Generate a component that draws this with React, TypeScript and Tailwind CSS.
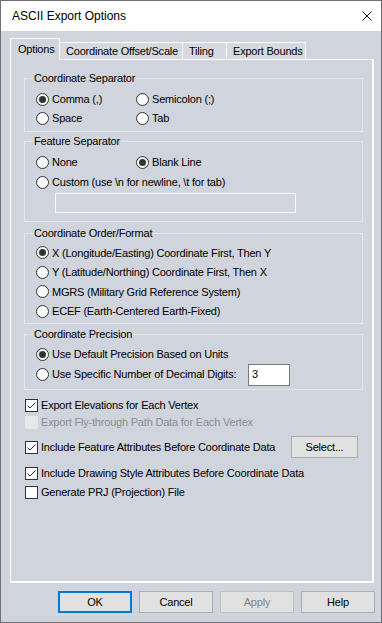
import clsx from 'clsx'

function Radio({ checked, label, className }: { checked?: boolean; label: string; className?: string }) {
    return (
        <div className={clsx('flex items-center', className)}>
            <span className="w-[13px] h-[13px] rounded-full border border-[#333] bg-white flex items-center justify-center shrink-0">
                {checked && <span className="w-[7px] h-[7px] rounded-full bg-[#333]" />}
            </span>
            <span className="ml-[3px] whitespace-nowrap">{label}</span>
        </div>
    )
}

function Checkbox({ checked, disabled, label }: { checked?: boolean; disabled?: boolean; label: string }) {
    return (
        <div className="flex items-center">
            <span
                className={clsx(
                    'w-[13px] h-[13px] border shrink-0 flex items-center justify-center',
                    disabled ? 'border-[#e6e8ec] bg-[#e6e8ec]' : 'border-[#333] bg-white'
                )}
            >
                {checked && (
                    <svg width="11" height="11" viewBox="0 0 11 11">
                        <polyline points="1.5,5.5 4,8 9.5,2.5" fill="none" stroke="#333" strokeWidth="1" />
                    </svg>
                )}
            </span>
            <span className={clsx('ml-[3px] whitespace-nowrap', disabled && 'text-[#8b8e94]')}>{label}</span>
        </div>
    )
}

function Group({ title, className, children }: { title: string; className?: string; children: React.ReactNode }) {
    return (
        <fieldset className={clsx('ml-[13px] w-[339px] border border-[#e3e6eb] px-[11px]', className)}>
            <legend className="ml-[-3px] px-[1px] leading-[13px]">{title}</legend>
            {children}
        </fieldset>
    )
}

function DialogButton({ label, primary, disabled }: { label: string; primary?: boolean; disabled?: boolean }) {
    return (
        <button
            disabled={disabled}
            className={clsx(
                'w-[74px] h-[22px] flex items-center justify-center',
                primary ? 'border-2 border-[#0078d7] bg-[#e1e1e1]' : 'border border-[#adadad] bg-[#e1e1e1]',
                disabled && 'bg-[#cccccc] border-[#bfbfbf] text-[#838383]'
            )}
        >
            {label}
        </button>
    )
}

const TABS = [
    { label: 'Coordinate Offset/Scale', w: 'w-[123px]' },
    { label: 'Tiling', w: 'w-[44px]' },
    { label: 'Export Bounds', w: 'w-[79px]' },
]

export default function App() {
    return (
        <div className="w-[382px] h-[623px] flex flex-col border border-[#6f6f6f] bg-[#d0d4dc] text-black text-[11px] tracking-[-0.2px] font-['Liberation_Sans',Arial,sans-serif]">
            {/* Title bar */}
            <div className="h-[30px] bg-white flex items-center justify-between pl-[11px] pr-[9px] shrink-0">
                <span className="text-[12px] tracking-normal">ASCII Export Options</span>
                <svg width="10" height="10" viewBox="0 0 10 10">
                    <path d="M0.5 0.5 L9.5 9.5 M9.5 0.5 L0.5 9.5" stroke="#111" strokeWidth="1" />
                </svg>
            </div>

            <div className="flex-1 flex flex-col pt-[7px] pl-[9px] pr-[6px]">
                {/* Tabs */}
                <div className="flex items-end h-[21px]">
                    <div className="w-[50px] h-[22px] -mb-px border-t border-l border-r border-white bg-[#d0d4dc] relative z-10 flex items-center pl-[7px]">
                        Options
                    </div>
                    {TABS.map(t => (
                        <div
                            key={t.label}
                            className={clsx(t.w, 'h-[17px] border-t border-r border-white bg-[#d5d9e0] flex items-center pl-[6px]')}
                        >
                            {t.label}
                        </div>
                    ))}
                </div>

                {/* Tab panel */}
                <div className="w-[364px] h-[524px] border-t border-l border-r-2 border-b-2 border-white flex flex-col">
                    <Group title="Coordinate Separator" className="mt-[12px] pt-[5px] pb-[3px]">
                        <div className="flex h-[19px]">
                            <Radio checked label="Comma (,)" className="w-[100px]" />
                            <Radio label="Semicolon (;)" />
                        </div>
                        <div className="flex h-[19px]">
                            <Radio label="Space" className="w-[100px]" />
                            <Radio label="Tab" />
                        </div>
                    </Group>

                    <Group title="Feature Separator" className="mt-[3px] pt-[4px] pb-[8px]">
                        <div className="flex h-[20px]">
                            <Radio label="None" className="w-[100px]" />
                            <Radio checked label="Blank Line" />
                        </div>
                        <Radio label={'Custom (use \\n for newline, \\t for tab)'} className="h-[20px]" />
                        <div className="ml-[19px] mt-[1px] w-[241px] h-[20px] border border-[#f7f8fa] bg-[#d0d4dc]" />
                    </Group>

                    <Group title="Coordinate Order/Format" className="mt-[5px] pt-[3px] pb-[2px]">
                        <Radio checked label="X (Longitude/Easting) Coordinate First, Then Y" className="h-[19.5px]" />
                        <Radio label="Y (Latitude/Northing) Coordinate First, Then X" className="h-[19.5px]" />
                        <Radio label="MGRS (Military Grid Reference System)" className="h-[19.5px]" />
                        <Radio label="ECEF (Earth-Centered Earth-Fixed)" className="h-[19.5px]" />
                    </Group>

                    <Group title="Coordinate Precision" className="mt-[4px] pt-[5px] pb-[3px]">
                        <Radio checked label="Use Default Precision Based on Units" className="h-[17px]" />
                        <div className="flex items-center h-[23px]">
                            <Radio label="Use Specific Number of Decimal Digits:" />
                            <div className="ml-auto mr-[61px] w-[42px] h-[22px] border border-[#7a7a7a] bg-white pl-[3px] pt-[1px] leading-[16px]">
                                3
                            </div>
                        </div>
                    </Group>

                    <div className="pl-[14px] pr-[13px] flex flex-col">
                        <div className="mt-[6px] h-[18px] flex items-center">
                            <Checkbox checked label="Export Elevations for Each Vertex" />
                        </div>
                        <div className="h-[17px] flex items-center">
                            <Checkbox disabled label="Export Fly-through Path Data for Each Vertex" />
                        </div>
                        <div className="mt-[5px] h-[22px] flex items-center justify-between">
                            <Checkbox checked label="Include Feature Attributes Before Coordinate Data" />
                            <button className="w-[67px] h-[22px] mr-[1px] border border-[#adadad] bg-[#e1e1e1] flex items-center justify-center">
                                Select...
                            </button>
                        </div>
                        <div className="mt-[6px] h-[18px] flex items-center">
                            <Checkbox checked label="Include Drawing Style Attributes Before Coordinate Data" />
                        </div>
                        <div className="mt-[1px] h-[18px] flex items-center">
                            <Checkbox label="Generate PRJ (Projection) File" />
                        </div>
                    </div>
                </div>

                {/* Dialog buttons */}
                <div className="mt-[8px] flex justify-end gap-[7px]">
                    <DialogButton primary label="OK" />
                    <DialogButton label="Cancel" />
                    <DialogButton disabled label="Apply" />
                    <DialogButton label="Help" />
                </div>
            </div>
        </div>
    )
}
